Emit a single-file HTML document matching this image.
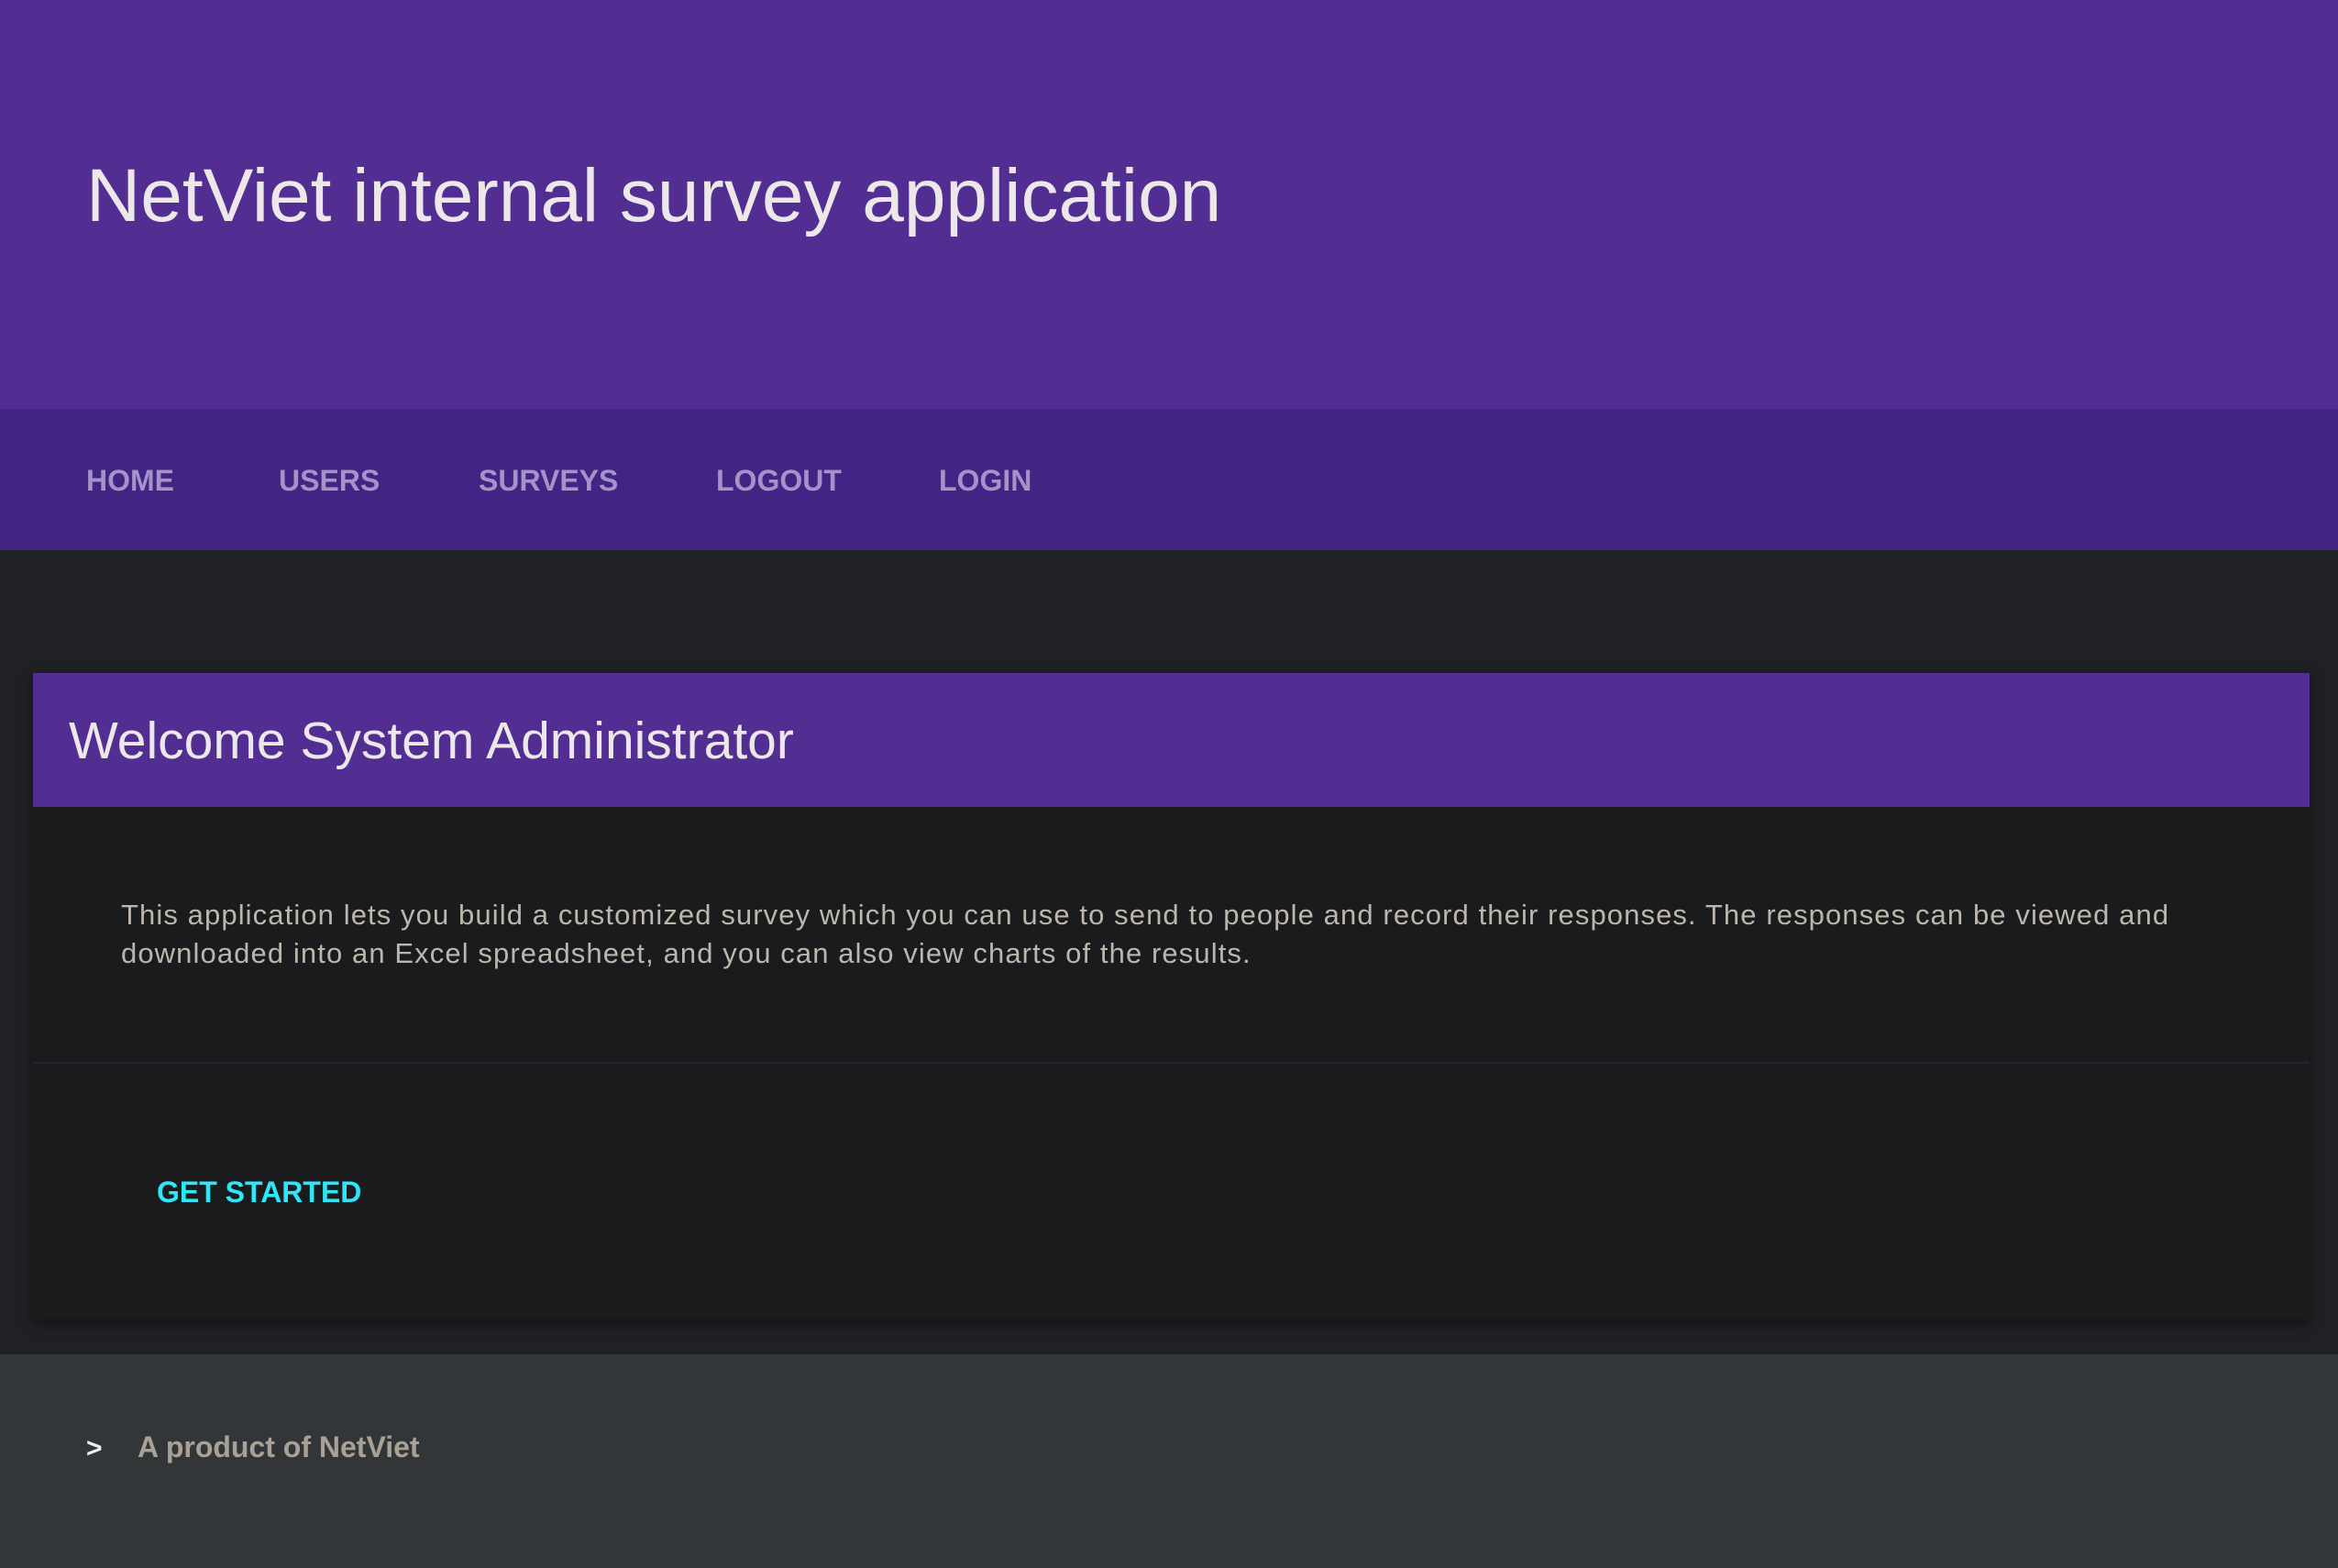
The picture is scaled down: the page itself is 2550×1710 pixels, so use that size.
<!DOCTYPE html>
<html><head><meta charset="utf-8"><style>
*{margin:0;padding:0;box-sizing:border-box}
body{width:2550px;height:1710px;background:#202124;font-family:"Liberation Sans",sans-serif;position:relative;overflow:hidden}
.a{position:absolute;white-space:nowrap}
.n{top:504px;font-size:32px;line-height:40px;font-weight:bold;color:#a393c8}
</style></head><body>
<div class="a" style="left:0;top:0;width:2550px;height:446px;background:#522e92"></div>
<div class="a" style="left:94px;top:164px;font-size:82px;line-height:100px;color:#ece8ea;letter-spacing:0px">NetViet internal survey application</div>
<div class="a" style="left:0;top:446px;width:2550px;height:154px;background:#432384"></div>
<div class="a n" style="left:94px">HOME</div>
<div class="a n" style="left:304px">USERS</div>
<div class="a n" style="left:522px">SURVEYS</div>
<div class="a n" style="left:781px">LOGOUT</div>
<div class="a n" style="left:1024px">LOGIN</div>
<div class="a" style="left:36px;top:734px;width:2483px;height:705px;background:#1a1b1d;box-shadow:0 4px 12px rgba(0,0,0,0.5)"></div>
<div class="a" style="left:36px;top:734px;width:2483px;height:146px;background:#522e92"></div>
<div class="a" style="left:75px;top:773px;font-size:57px;line-height:70px;color:#ece8ea">Welcome System Administrator</div>
<div class="a" style="left:132px;top:977px;font-size:31px;line-height:42px;color:#bcb6ac;letter-spacing:1.1px">This application lets you build a customized survey which you can use to send to people and record their responses. The responses can be viewed and<br>downloaded into an Excel spreadsheet, and you can also view charts of the results.</div>
<div class="a" style="left:36px;top:1158px;width:2483px;height:2px;background:#24252a"></div>
<div class="a" style="left:171px;top:1280px;font-size:32px;line-height:40px;font-weight:bold;color:#2ee6f8">GET STARTED</div>
<div class="a" style="left:0;top:1477px;width:2550px;height:233px;background:#333639"></div>
<div class="a" style="left:94px;top:1560px;font-size:30px;line-height:40px;font-weight:bold;color:#eeeeee">&gt;</div>
<div class="a" style="left:150px;top:1558px;font-size:32px;line-height:40px;font-weight:bold;color:#a9a196">A product of NetViet</div>
</body></html>
